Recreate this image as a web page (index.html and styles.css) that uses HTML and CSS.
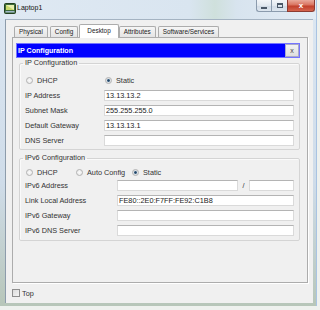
FILE: index.html
```html
<!DOCTYPE html>
<html lang="en">
<head>
  <meta charset="UTF-8" />
  <title>Laptop1</title>
  <link rel="stylesheet" href="styles.css">
</head>
<body>

<div class="window">
  <div class="titlebar">
    <svg class="app-icon" width="12" height="11" viewBox="0 0 12 11">
      <rect x="0.5" y="0.5" width="11" height="10" rx="1" fill="#3d6b3a" stroke="#24401f"/>
      <rect x="2" y="2" width="8" height="5" fill="#c8d86a"/>
      <path d="M2 2 L10 7 L10 2 Z" fill="#e9efb0"/>
      <rect x="1.5" y="8" width="9" height="1.5" fill="#9fb7c9"/>
    </svg>
    <span class="title">Laptop1</span>
    <div class="controls">
      <span class="ctl min"><i></i></span>
      <span class="ctl max"><i></i></span>
      <span class="ctl close">x</span>
    </div>
  </div>

  <div class="client">
    <div class="tabs">
      <span class="tab">Physical</span>
      <span class="tab">Config</span>
      <span class="tab active">Desktop</span>
      <span class="tab">Attributes</span>
      <span class="tab">Software/Services</span>
    </div>

    <div class="panel">
      <div class="app-header">
        <span>IP Configuration</span>
        <span class="app-close">x</span>
      </div>

      <div class="app-body">
        <fieldset class="group v4">
          <legend>IP Configuration</legend>
          <div class="radios">
            <span class="radio"><i></i>DHCP</span>
            <span class="radio"><i class="on"></i>Static</span>
          </div>
          <div class="field"><label>IP Address</label><input type="text" value="13.13.13.2"></div>
          <div class="field"><label>Subnet Mask</label><input type="text" value="255.255.255.0"></div>
          <div class="field"><label>Default Gateway</label><input type="text" value="13.13.13.1"></div>
          <div class="field"><label>DNS Server</label><input type="text" value=""></div>
        </fieldset>

        <fieldset class="group v6">
          <legend>IPv6 Configuration</legend>
          <div class="radios">
            <span class="radio"><i></i>DHCP</span>
            <span class="radio"><i></i>Auto Config</span>
            <span class="radio"><i class="on"></i>Static</span>
          </div>
          <div class="field">
            <label>IPv6 Address</label>
            <input type="text" value="">
            <span class="slash">/</span>
            <input type="text" class="prefix" value="">
          </div>
          <div class="field"><label>Link Local Address</label><input type="text" value="FE80::2E0:F7FF:FE92:C1B8"></div>
          <div class="field"><label>IPv6 Gateway</label><input type="text" value=""></div>
          <div class="field"><label>IPv6 DNS Server</label><input type="text" value=""></div>
        </fieldset>
      </div>
    </div>

    <div class="top-check"><span class="box"></span>Top</div>
  </div>
</div>

</body>
</html>
```

FILE: styles.css
```css
* { box-sizing: border-box; }
html, body {
  margin: 0;
  padding: 0;
  width: 100%;
  height: 100%;
  overflow: hidden;
  background: #eef1ee;
  font-family: "Liberation Sans", Arial, sans-serif;
  font-size: 7.3px;
  color: #2a2a2a;
}

.window {
  width: 317px;
  height: 306px;
  display: flex;
  flex-direction: column;
  background: linear-gradient(to bottom, #dce7f2 0%, #cfdce9 60%, #b7c6b9 100%);
  border-right: 1px solid #a9c3e2;
}

/* title bar */
.titlebar {
  height: 19px;
  display: flex;
  align-items: flex-start;
  flex-shrink: 0;
  background: linear-gradient(to right, #dfe9f3 0%, #d9e5f0 60%, #cfe0dc 68%, #d8e4ef 75%, #e2ebf4 100%);
}
.app-icon { margin: 3px 1px 0 4px; }
.title {
  margin-top: 3px;
  line-height: 10px;
  font-size: 7px;
  color: #111;
}
.controls {
  margin-left: auto;
  margin-right: 1px;
  display: flex;
}
.ctl {
  height: 12px;
  display: flex;
  align-items: center;
  justify-content: center;
  border: 1px solid #8b9bad;
  border-top: none;
  background: linear-gradient(to bottom, #f3f6f9 0%, #e1e8ef 50%, #d0dae5 51%, #dde6ef 100%);
}
.ctl.min { width: 15px; border-radius: 0 0 0 3px; border-right: none; }
.ctl.max { width: 16px; border-right: none; }
.ctl.close {
  width: 28px;
  border-color: #8d3b31;
  border-radius: 0 0 3px 0;
  background: linear-gradient(to bottom, #e9a99b 0%, #d9735f 45%, #c2402b 55%, #d4644e 100%);
  color: #fff;
  font-weight: bold;
  font-size: 8px;
  line-height: 10px;
}
.ctl.min i { width: 6px; height: 2px; margin-top: 4px; background: #4a5868; }
.ctl.max i { width: 6px; height: 5px; border: 1px solid #4a5868; border-top-width: 2px; }

/* client area */
.client {
  flex: 1;
  margin: 0 3px 3px 5px;
  padding: 4px 5px 6px 6px;
  display: flex;
  flex-direction: column;
  background: #f0f0f0;
  border-left: 1px solid #8d9cab;
  border-top: 1px solid #a4b3c2;
}

.tabs {
  height: 13px;
  display: flex;
  align-items: flex-end;
  padding-left: 2px;
  flex-shrink: 0;
}
.tab {
  height: 11px;
  padding: 0 4px;
  margin-right: 2px;
  font-size: 6.4px;
  line-height: 10px;
  color: #222;
  border: 1px solid #acacac;
  border-bottom: none;
  border-radius: 2px 2px 0 0;
  background: linear-gradient(to bottom, #f6f6f6, #e4e4e4);
}
.tab.active {
  height: 14px;
  margin: 0 0 -1px -1px;
  padding: 0 7px;
  line-height: 12px;
  background: #fff;
  position: relative;
  z-index: 1;
}

.panel {
  flex: 1;
  padding: 5px 7px 0 3px;
  border: 1px solid #acacac;
  box-shadow: 1px 1px 0 #fff;
}

.app-header {
  height: 15px;
  display: flex;
  align-items: center;
  padding-left: 1px;
  background: #0000ff;
  border: 1px solid #7474ff;
  color: #fff;
  font-weight: bold;
  font-size: 7.1px;
}
.app-close {
  margin-left: auto;
  width: 14px;
  height: 13px;
  display: flex;
  align-items: center;
  justify-content: center;
  background: linear-gradient(to bottom, #f2f2f2, #dedede);
  border: 1px solid #a9a9c9;
  color: #444;
  font-weight: normal;
  font-size: 7px;
}

.app-body { padding-left: 3px; }

.group {
  margin: 1px 0 0 0;
  padding: 8px 5px 3px 5px;
  border: 1px solid #d4d4d4;
  border-radius: 2px;
  box-shadow: inset 1px 1px 0 #fafafa;
  min-width: 0;
}
.group legend {
  padding: 0 2px;
  margin-left: -2px;
  line-height: 8px;
  color: #333;
}
.group.v6 { margin-top: 4px; padding: 5px 5px 4px 5px; }

.radios {
  height: 11px;
  display: flex;
  align-items: center;
  margin-bottom: 1px;
}
.v6 .radios { margin-bottom: -2px; }
.radio {
  display: flex;
  align-items: center;
  gap: 4px;
  color: #333;
}
.radio i {
  width: 7px;
  height: 7px;
  margin-left: 1px;
  border-radius: 50%;
  border: 1px solid #b2b2b2;
  background: radial-gradient(circle, #fafafa 0%, #e6e6e6 100%);
}
.radio i.on {
  background: radial-gradient(circle, #24415f 0%, #3d6487 35%, #d8dde2 45%, #eeeeee 100%);
}
.v4 .radio:first-child { width: 79px; }
.v6 .radio:nth-child(1) { width: 50px; }
.v6 .radio:nth-child(2) { width: 56px; }

.field {
  height: 11px;
  margin-top: 4px;
  display: flex;
  align-items: center;
}
.field label { flex: 0 0 79px; color: #333; }
.v6 .field label { flex-basis: 92px; }
.field input {
  flex: 1;
  min-width: 0;
  height: 11px;
  margin: 0;
  padding: 0 1px;
  font-family: inherit;
  font-size: 7.3px;
  color: #222;
  background: #fff;
  border: 1px solid #dadada;
  border-top-color: #b4b4b4;
  border-radius: 0;
  outline: none;
}
.field .slash { flex: 0 0 11px; text-align: center; color: #333; }
.field input.prefix { flex: 0 0 45px; }

.top-check {
  height: 8px;
  margin-top: 6px;
  display: flex;
  align-items: center;
  gap: 2px;
  color: #333;
}
.top-check .box {
  width: 8px;
  height: 8px;
  border: 1px solid #8e8e8e;
  background: linear-gradient(to bottom right, #dcdcdc, #f4f4f4);
}
```
